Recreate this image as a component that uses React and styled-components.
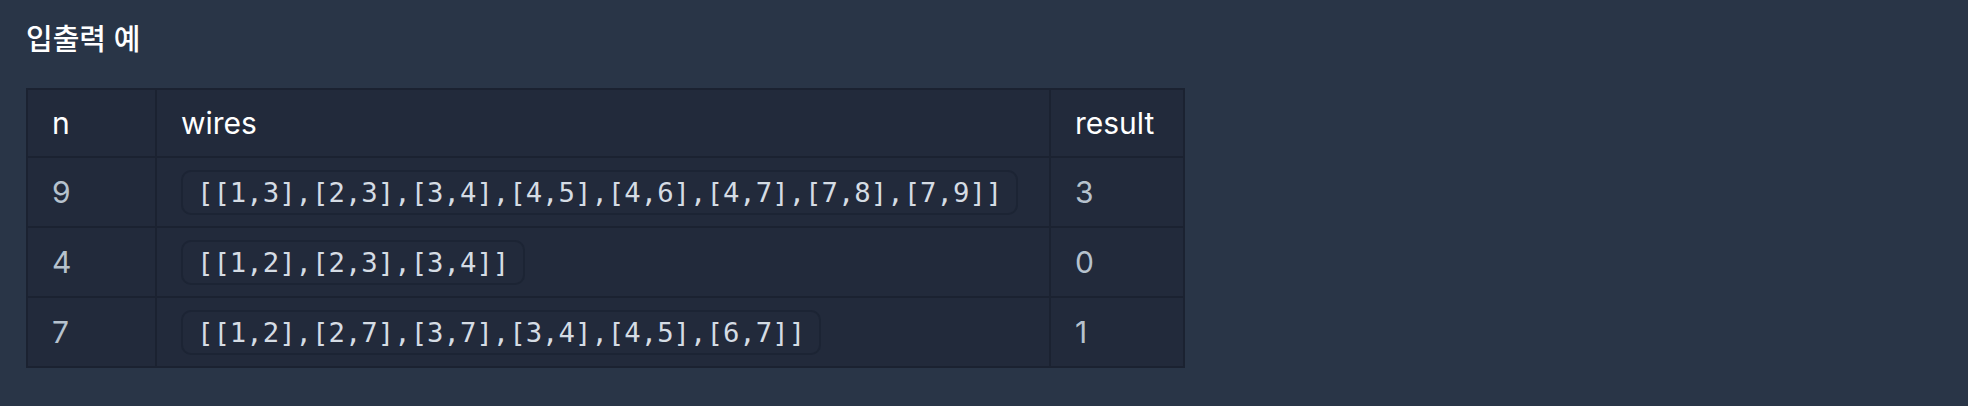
import React from "react";
import styled, { createGlobalStyle } from "styled-components";

const GlobalStyle = createGlobalStyle`
  html, body {
    margin: 0;
    padding: 0;
    background: #293547;
  }
  body {
    font-family: Inter, "Noto Sans", "Noto Sans CJK KR", sans-serif;
  }
`;

const Page = styled.div`
  min-height: 406px;
  padding: 21px 26px;
  box-sizing: border-box;
  background: #293547;
`;

const Title = styled.h5`
  margin: 0 0 29px;
  font-family: Inter, "Noto Sans CJK KR", sans-serif;
  font-size: 29px;
  line-height: 38px;
  font-weight: 500;
  color: #ffffff;
`;

const Table = styled.table`
  border-collapse: collapse;
  background: #222a3b;
  border: 2px solid #1b2231;
`;

const Th = styled.th`
  height: 68px;
  padding: 0 24px;
  border: 2px solid #1b2231;
  text-align: left;
  font-size: 30px;
  font-weight: 400;
  color: #ffffff;
  width: ${(p) => p.$w || "auto"};
  box-sizing: border-box;
`;

const Td = styled.td`
  height: 68px;
  padding: 0 24px;
  border: 2px solid #1b2231;
  font-size: 30px;
  color: #b6c2ce;
  vertical-align: middle;
`;

const Code = styled.code`
  display: inline-block;
  padding: 4px 14px;
  border: 2px solid #1c2434;
  border-radius: 10px;
  background: #222a3b;
  font-family: "DejaVu Sans Mono", "Liberation Mono", monospace;
  font-size: 27.3px;
  line-height: 33px;
  color: #d5dce4;
`;

const rows = [
  { n: 9, wires: "[[1,3],[2,3],[3,4],[4,5],[4,6],[4,7],[7,8],[7,9]]", result: 3 },
  { n: 4, wires: "[[1,2],[2,3],[3,4]]", result: 0 },
  { n: 7, wires: "[[1,2],[2,7],[3,7],[3,4],[4,5],[6,7]]", result: 1 },
];

export default function App() {
  return (
    <>
      <GlobalStyle />
      <Page>
        <Title>입출력 예</Title>
        <Table>
          <thead>
            <tr>
              <Th $w="129px">n</Th>
              <Th $w="894px">wires</Th>
              <Th $w="134px">result</Th>
            </tr>
          </thead>
          <tbody>
            {rows.map((r) => (
              <tr key={r.wires}>
                <Td>{r.n}</Td>
                <Td>
                  <Code>{r.wires}</Code>
                </Td>
                <Td>{r.result}</Td>
              </tr>
            ))}
          </tbody>
        </Table>
      </Page>
    </>
  );
}
